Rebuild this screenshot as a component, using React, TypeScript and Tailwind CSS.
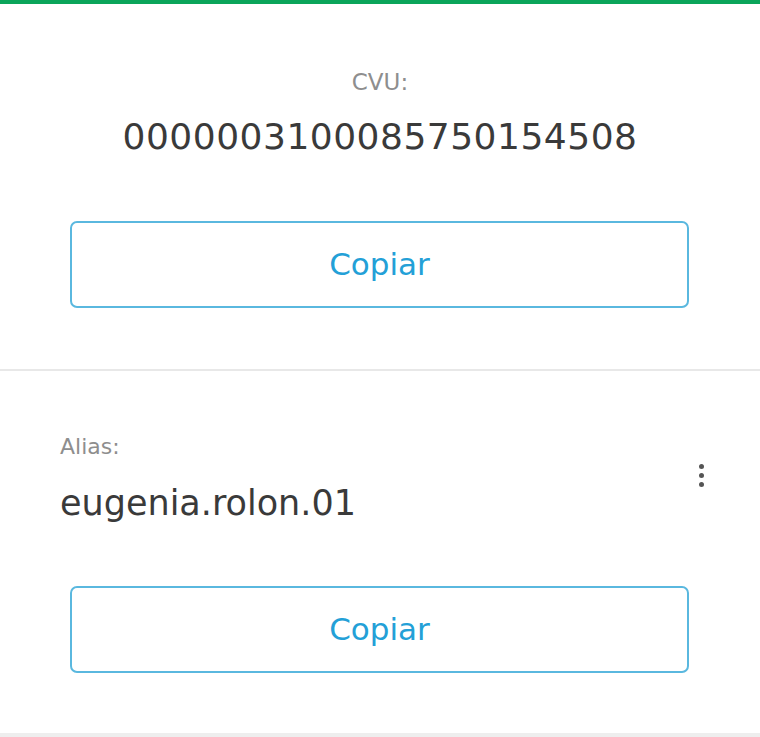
export default function App() {
  return (
    <div className="min-h-[737px] w-full bg-white font-['DejaVu_Sans','Liberation_Sans',sans-serif]">
      <div className="h-[4px] bg-[#0aa55a]" />

      {/* CVU */}
      <section className="flex flex-col items-center pt-[66px] pb-[61px]">
        <p className="text-[23px] leading-[24px] text-[#8e8e8e]">CVU:</p>
        <p className="mt-[21px] text-[36px] leading-[44px] tracking-[0.5px] text-[#3a3a3a]">
          0000003100085750154508
        </p>
        <CopyButton className="mt-[62px]" />
      </section>

      <div className="h-[2px] bg-[#e8e8e8]" />

      {/* Alias */}
      <section className="pt-[64px] pb-[60px]">
        <div className="flex items-center justify-between pl-[60px] pr-[56px]">
          <div>
            <p className="text-[22px] leading-[24px] text-[#8e8e8e]">Alias:</p>
            <p className="mt-[22px] text-[35px] leading-[44px] text-[#3a3a3a]">eugenia.rolon.01</p>
          </div>
          <button className="mb-[10px] flex flex-col items-center gap-[4px] p-0">
            <span className="h-[5px] w-[5px] rounded-full bg-[#555]" />
            <span className="h-[5px] w-[5px] rounded-full bg-[#555]" />
            <span className="h-[5px] w-[5px] rounded-full bg-[#555]" />
          </button>
        </div>
        <div className="flex justify-center">
          <CopyButton className="mt-[61px]" />
        </div>
      </section>

      <div className="h-[4px] bg-[#eeeeee]" />
    </div>
  );
}

function CopyButton({ className = "" }: { className?: string }) {
  return (
    <button
      className={`ml-[70px] mr-[71px] flex h-[87px] w-[619px] items-center justify-center rounded-[7px] border-2 border-[#5ab8df] bg-white text-[31px] text-[#23a0d7] ${className}`}
    >
      Copiar
    </button>
  );
}
